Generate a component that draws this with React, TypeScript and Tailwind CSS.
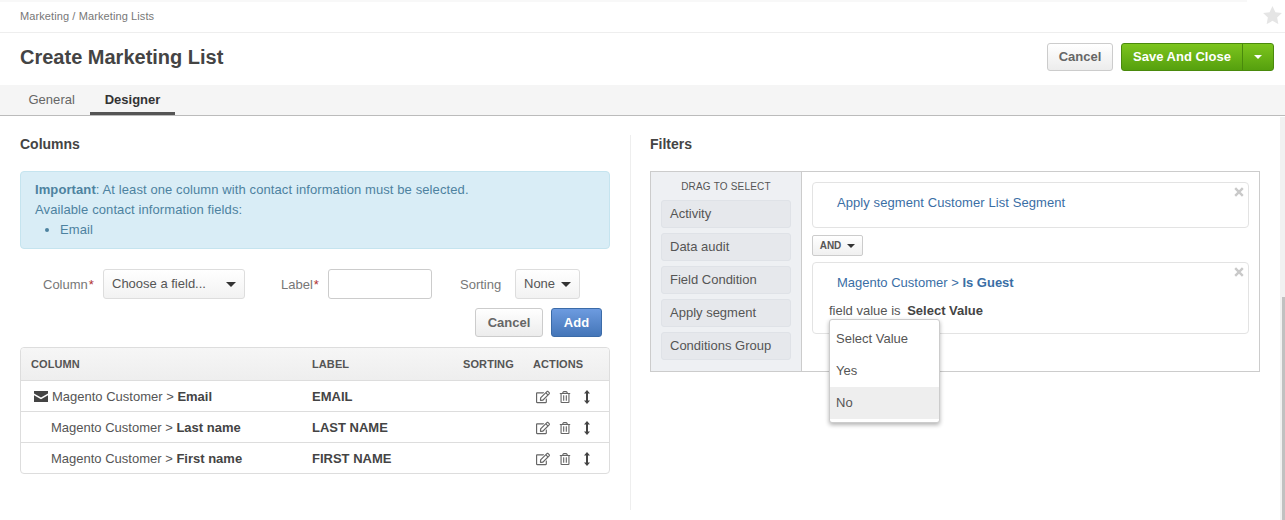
import { FaRegEdit, FaRegTrashAlt } from 'react-icons/fa'

const font = { fontFamily: '"Liberation Sans", Arial, sans-serif' }

const rows = [
  { field: 'Email', label: 'EMAIL', contact: true },
  { field: 'Last name', label: 'LAST NAME', contact: false },
  { field: 'First name', label: 'FIRST NAME', contact: false },
]

const criteria = ['Activity', 'Data audit', 'Field Condition', 'Apply segment', 'Conditions Group']

function Caret({ small = false, white = false }: { small?: boolean; white?: boolean }) {
  const size = small ? 'border-x-[4px] border-t-[4px]' : 'border-x-[5px] border-t-[5px]'
  const color = white ? 'border-t-white' : 'border-t-[#333]'
  return <span className={`inline-block h-0 w-0 border-x-transparent ${size} ${color}`} />
}

function CloseX() {
  return (
    <svg width="10" height="10" viewBox="0 0 10 10" className="absolute top-[4px] right-[4px]">
      <path d="M1.2 1.2 8.8 8.8M8.8 1.2 1.2 8.8" stroke="#c9c9c9" strokeWidth="2.4" />
    </svg>
  )
}

function Sorter() {
  return (
    <svg width="6" height="14" viewBox="0 0 6 14">
      <path d="M3 0 6 3.500H4V10.500H6L3 14 0 10.500H2V3.500H0Z" fill="#444" />
    </svg>
  )
}

function TableHead() {
  return (
    <div className="flex h-[33px] items-center rounded-t-[4px] border-b border-[#ddd] bg-gradient-to-b from-[#f6f6f6] to-[#eee] pt-[1px] text-[11px] font-bold tracking-[0.1px] text-[#555]">
      <div className="w-[291px] pl-[10px]">COLUMN</div>
      <div className="w-[151px]">LABEL</div>
      <div className="w-[70px]">SORTING</div>
      <div>ACTIONS</div>
    </div>
  )
}

export default function App() {
  return (
    <div style={font} className="relative h-[520px] w-[1285px] overflow-hidden bg-white text-[14px] text-[#444]">
      {/* Page header */}
      <div className="h-[2px] w-[1247px] bg-[#f8f8f8]" />
      <div className="relative flex h-[31px] items-center border-b border-[#eee] px-[20px] pb-[1px] text-[11px] tracking-[0.1px] text-[#777]">
        Marketing&nbsp;/&nbsp;Marketing Lists
        <svg width="19" height="18" viewBox="0 0 24 23" className="absolute top-[4px] right-[3px]">
          <path d="M12 0l3.700 7.900 8.300 1-6.100 5.900 1.600 8.400L12 19l-7.500 4.200 1.600-8.400L0 8.900l8.300-1z" fill="#e5e5e5" />
        </svg>
      </div>
      <div className="flex h-[52px] items-center justify-between pr-[11px] pb-[4px] pl-[20px]">
        <h1 className="text-[20px] font-bold text-[#444]">Create Marketing List</h1>
        <div className="flex items-center">
          <button className="mr-[8px] h-[28px] w-[66px] rounded-[3px] border border-[#ccc] bg-gradient-to-b from-white to-[#ececec] text-[13px] font-bold text-[#666]">Cancel</button>
          <div className="flex h-[28px] rounded-[3px] border border-[#4a8a0c] bg-gradient-to-b from-[#7cc51d] to-[#55a00e] text-[13px] font-bold text-white">
            <span className="flex w-[121px] items-center justify-center border-r border-[#4a8a0c]">Save And Close</span>
            <span className="flex w-[30px] items-center justify-center"><Caret small white /></span>
          </div>
        </div>
      </div>
      <div className="flex h-[31px] items-end border-b border-[#bbb] bg-[#f5f5f5] pl-[15px] text-[13px]">
        <div className="flex h-[30px] w-[60px] items-center justify-end pb-[1px] tracking-[0.05px] text-[#666]">General</div>
        <div className="ml-[15px] flex h-[30px] w-[85px] items-center justify-center border-b-[3px] border-[#555] pt-[2px] font-bold text-[#333]">Designer</div>
      </div>

      {/* Designer body */}
      <div className="flex pt-[20px]">
        <div className="w-[630px] pr-[20px] pl-[20px]">
          <h2 className="mb-[18px] h-[17px] text-[14px] leading-[17px] font-bold text-[#444]">Columns</h2>
          <div className="h-[78px] rounded-[4px] border border-[#c5e4ef] bg-[#d9edf6] px-[14px] pt-[8px] text-[13px] leading-[20px] tracking-[0.1px] text-[#4d82a0]">
            <p><b>Important</b>: At least one column with contact information must be selected.</p>
            <p>Available contact information fields:</p>
            <ul className="ml-[25px] list-disc"><li>Email</li></ul>
          </div>

          <div className="mt-[20px] flex h-[30px] items-center text-[13px]">
            <label className="ml-[23px] w-[60px] pt-[1px] text-[#777]">Column<span className="ml-[1px] text-[#b03030]">*</span></label>
            <div className="flex h-[30px] w-[142px] items-center justify-between rounded-[3px] border border-[#ddd] bg-gradient-to-b from-white to-[#f2f2f2] pr-[8px] pl-[8px] text-[#555]">
              Choose a field... <Caret />
            </div>
            <label className="ml-[36px] w-[47px] pt-[1px] text-[#777]">Label<span className="ml-[1px] text-[#b03030]">*</span></label>
            <div className="h-[30px] w-[104px] rounded-[3px] border border-[#ccc] bg-white" />
            <label className="ml-[28px] w-[55px] pt-[1px] text-[#777]">Sorting</label>
            <div className="flex h-[30px] w-[65px] items-center justify-between rounded-[3px] border border-[#ddd] bg-gradient-to-b from-white to-[#f2f2f2] px-[8px] text-[#555]">
              None <Caret />
            </div>
          </div>

          <div className="mt-[9px] flex justify-end pr-[8px]">
            <button className="mr-[8px] h-[29px] w-[68px] rounded-[3px] border border-[#ccc] bg-gradient-to-b from-white to-[#ececec] text-[13px] font-bold text-[#666]">Cancel</button>
            <button className="h-[29px] w-[51px] rounded-[3px] border border-[#3b6ba8] bg-gradient-to-b from-[#6d9be0] to-[#4476b8] text-[13px] font-bold text-white">Add</button>
          </div>

          <div className="mt-[10px] rounded-[4px] border border-[#ddd]">
            <TableHead />
            {rows.map((r, i) => (
              <div key={r.field} className={`flex items-center pt-[1px] text-[13px] ${i < 2 ? 'h-[31px] border-b border-[#ddd]' : 'h-[30px]'}`}>
                <div className={`flex w-[291px] items-center ${r.contact ? 'pl-[13px]' : 'pl-[30px]'}`}>
                  {r.contact && (
                    <svg width="14" height="11" viewBox="0 0 14 11" className="mr-[4px]">
                      <path d="M0 0H14V2.500L7 6.500 0 2.500ZM0 4.200 7 8.200 14 4.200V11H0Z" fill="#444" />
                    </svg>
                  )}
                  <span className="text-[#555]">Magento Customer &gt;&nbsp;</span><b className="text-[#444]">{r.field}</b>
                </div>
                <div className="w-[224px] font-bold text-[#444]">{r.label}</div>
                <div className="flex items-center gap-[9px] text-[#666]">
                  <FaRegEdit size={14} />
                  <FaRegTrashAlt size={12} />
                  <span className="ml-[4px] flex text-[#444]"><Sorter /></span>
                </div>
              </div>
            ))}
          </div>
        </div>

        <div className="-mt-[1px] h-[375px] w-[20px] border-l border-[#eee]" />

        <div className="w-[610px]">
          <h2 className="mb-[18px] h-[17px] text-[14px] leading-[17px] font-bold text-[#444]">Filters</h2>
          <div className="flex h-[201px] border border-[#ccc]">
            <div className="w-[151px] border-r border-[#ccc] bg-[#eef0f3] px-[10px] pt-[9px]">
              <div className="mb-[7px] text-center text-[10px] leading-[12px] tracking-[0.2px] text-[#555]">DRAG TO SELECT</div>
              <div className="flex flex-col gap-[5px]">
                {criteria.map(c => (
                  <div key={c} className="flex h-[28px] items-center rounded-[3px] border border-[#dfe2e7] bg-[#e6e8ec] pl-[8px] text-[13px] text-[#555]">{c}</div>
                ))}
              </div>
            </div>
            <div className="flex-1 px-[10px] pt-[10px]">
              <div className="relative flex h-[46px] items-center rounded-[4px] border border-[#e3e3e3] pb-[5px] pl-[24px] text-[13px] tracking-[0.08px] text-[#3a6ea5]">
                Apply segment Customer List Segment
                <CloseX />
              </div>
              <div className="mt-[7px] mb-[6px] flex h-[21px] w-[51px] items-center justify-center gap-[6px] rounded-[2px] border border-[#ccc] bg-gradient-to-b from-white to-[#f0f0f0] text-[10px] font-bold text-[#555]">
                AND <Caret small />
              </div>
              <div className="relative h-[72px] rounded-[4px] border border-[#e3e3e3] text-[13px]">
                <div className="pt-[10px] pl-[24px] text-[#3a6ea5]">Magento Customer &gt; <b>Is Guest</b></div>
                <div className="pt-[8px] pl-[16px] text-[#555]">field value is <b className="ml-[3px] text-[#444]">Select Value</b></div>
                <CloseX />
              </div>
            </div>
          </div>
        </div>
      </div>

      {/* Value dropdown */}
      <div className="absolute top-[319px] left-[829px] w-[111px] rounded-[3px] border border-[#ccc] bg-white py-[3px] text-[13px] text-[#555] shadow-[0_2px_4px_rgba(0,0,0,0.3)]">
        <div className="flex h-[32px] items-center pl-[6px]">Select Value</div>
        <div className="flex h-[32px] items-center pl-[6px]">Yes</div>
        <div className="flex h-[32px] items-center bg-[#eee] pl-[6px]">No</div>
      </div>

      {/* Scrollbar */}
      <div className="absolute top-[117px] right-0 h-[403px] w-[5px] bg-[#f1f1f1]">
        <div className="mt-[180px] h-[223px] w-[5px] translate-x-[2px] bg-[#c1c1c1]" />
      </div>
    </div>
  )
}
